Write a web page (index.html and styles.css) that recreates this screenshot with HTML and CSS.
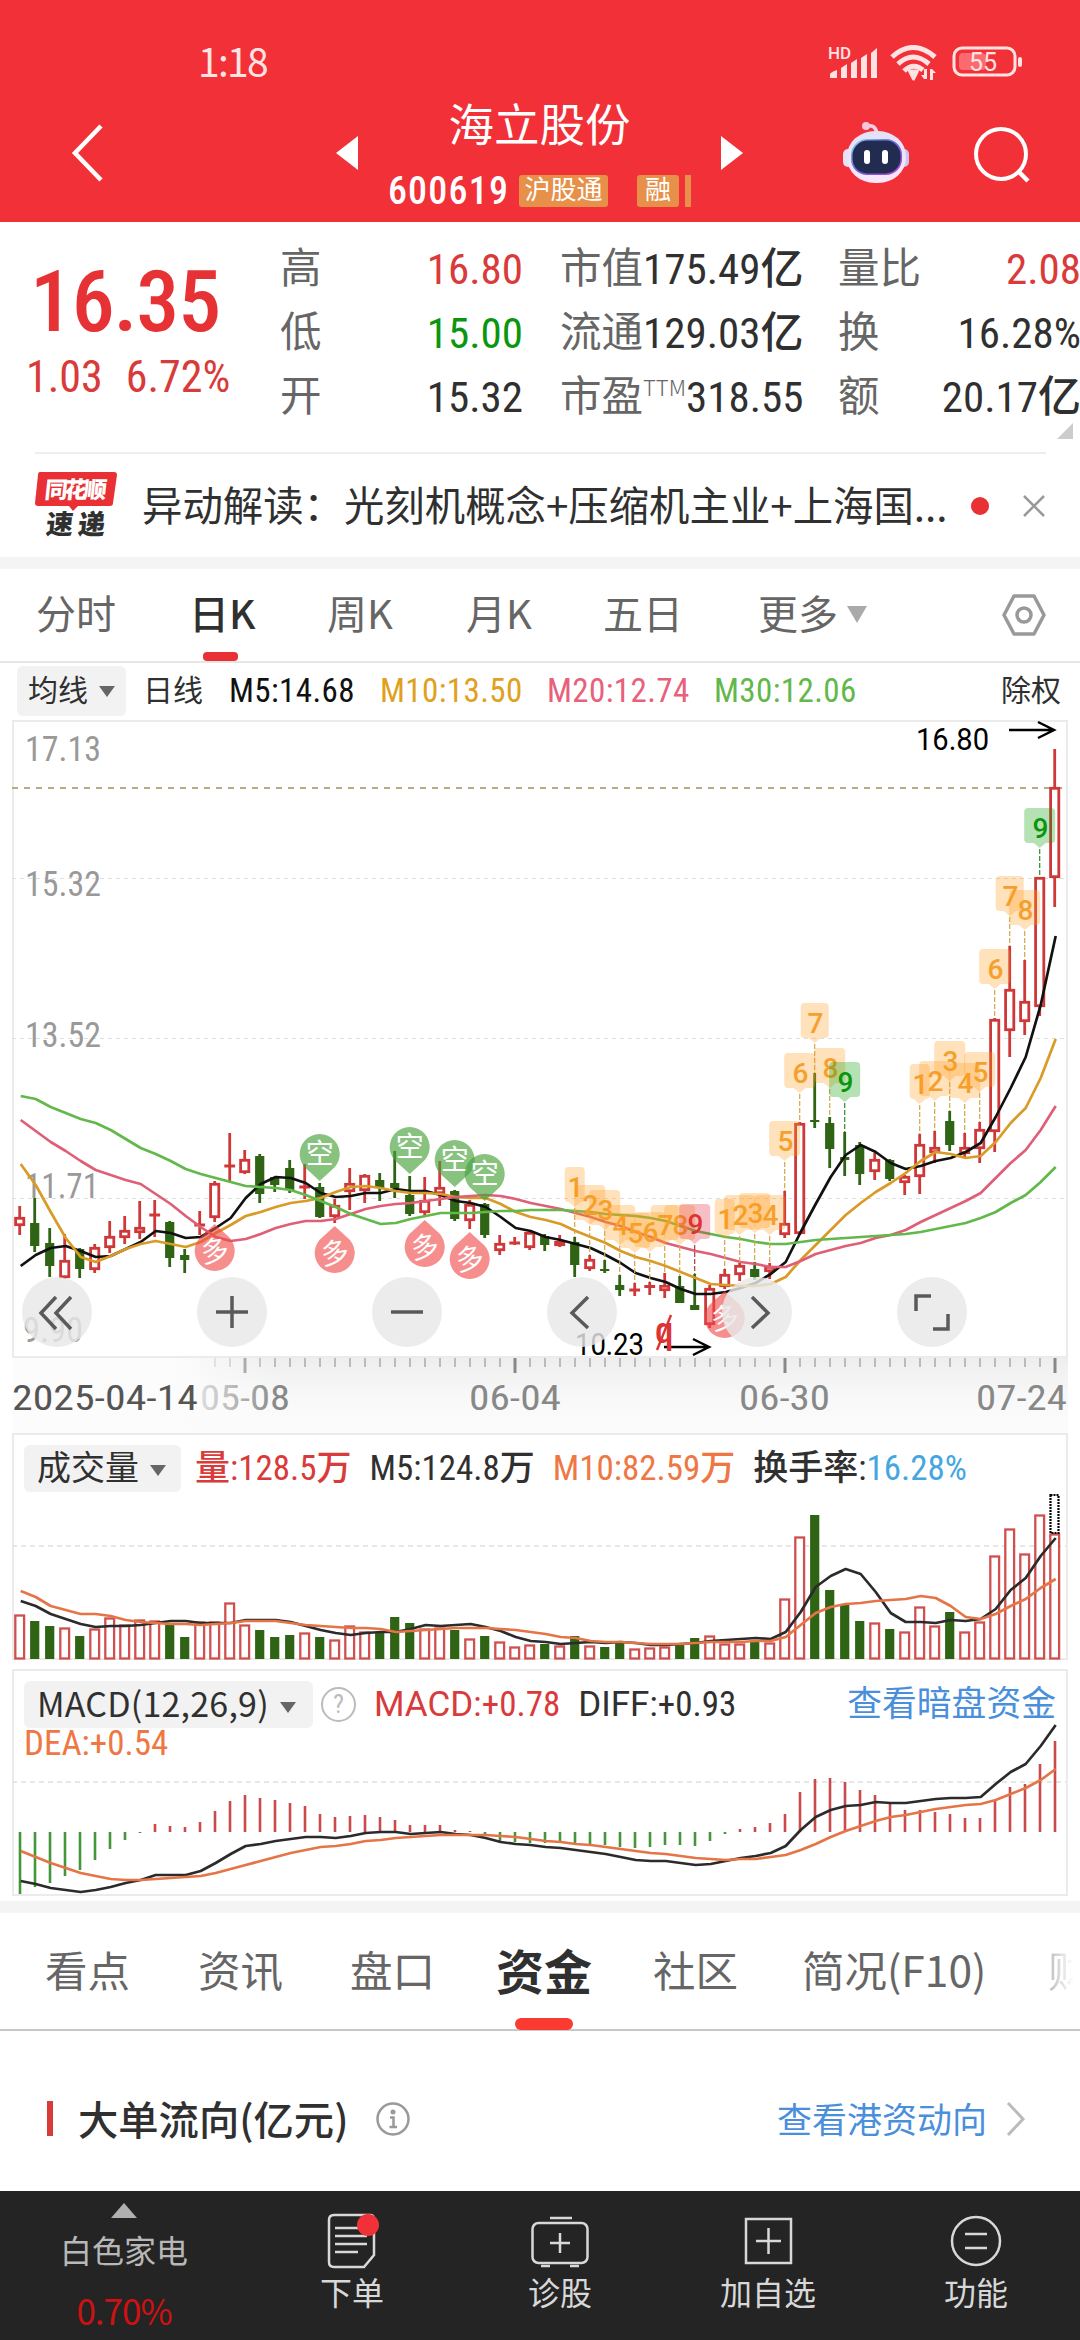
FILE: index.html
```html
<!DOCTYPE html>
<html lang="zh-CN">
<head>
    <meta charset="UTF-8">
    <meta name="viewport" content="width=device-width, initial-scale=1.0">
    <title>海立股份 600619</title>
    <link rel="stylesheet" href="styles.css">
</head>
<body>

    <!-- 顶部 -->
    <header class="header">
        <div class="status-bar">
            <span class="clock">1:18</span>
            <svg class="status-icons" width="200" height="40" viewBox="0 0 200 40">
                <g fill="#ffe3e3">
                    <text x="0" y="14" class="hd">HD</text>
                    <path d="M2 33v-4q1-2 7-4v8z M13 33v-10l6-4v14z M23 33v-15l6-4v19z M33 33v-20l6-4v24z M43 33v-25l6-5v30z"/>
                    <path d="M78 27l8 0l-4 8z" stroke="#ffe3e3" stroke-width="3" stroke-linejoin="round" transform="translate(3.5 -1)"/>
                    <path d="M99 24v10h-3l-3-4h3v-6z M102 35v-11h2l4 4h-3v7z"/>
                </g>
                <g fill="none" stroke="#ffe3e3" stroke-width="5">
                    <path d="M64 12Q85-7 107 12"/>
                    <path d="M70 19Q85 5 101 19"/>
                    <path d="M76 26Q85 17 95 25"/>
                </g>
                <rect x="126" y="3" width="61" height="27" rx="8" fill="none" stroke="#ffe3e3" stroke-width="3"/>
                <rect x="131" y="8" width="27" height="17" rx="4" fill="#fa6a6f"/>
                <rect x="190" y="12" width="4" height="10" rx="2" fill="#ffe3e3"/>
                <text x="155" y="26" class="battery">55</text>
            </svg>
        </div>
        <div class="title-bar">
            <svg class="back" width="34" height="60" viewBox="0 0 34 60"><path d="M30 3L4 30L30 57" fill="none" stroke="#fff" stroke-width="4.5"/></svg>
            <svg width="22" height="34" viewBox="0 0 22 34"><path d="M22 0v34L0 17z" fill="#fff"/></svg>
            <div class="stock">
                <h1 class="stock-name">海立股份</h1>
                <div class="stock-code">
                    <span class="code">600619</span>
                    <span class="tag">沪股通</span>
                    <span class="tag tag-rong">融</span>
                    <span class="tag-rest"></span>
                </div>
            </div>
            <svg width="22" height="34" viewBox="0 0 22 34"><path d="M0 0v34L22 17z" fill="#fff"/></svg>
            <svg class="robot" width="68" height="64" viewBox="0 0 68 64">
                <defs>
                    <linearGradient id="shell" x1="0" y1="0" x2="0" y2="1">
                        <stop offset="0" stop-color="#e3e1f6"/><stop offset="1" stop-color="#fbe6fa"/>
                    </linearGradient>
                    <linearGradient id="visor" x1="0" y1="0" x2="1" y2="1">
                        <stop offset="0" stop-color="#8fdcf5"/><stop offset=".5" stop-color="#5f62d8"/><stop offset="1" stop-color="#b44bd0"/>
                    </linearGradient>
                </defs>
                <path d="M25 5q8-2 10 7" fill="none" stroke="#f3cfe6" stroke-width="3.5"/>
                <circle cx="24" cy="5" r="4" fill="#f6c6df"/>
                <rect x="1" y="28" width="10" height="18" rx="5" fill="#e6e2f8"/>
                <rect x="57" y="28" width="10" height="18" rx="5" fill="#c9c5f0"/>
                <rect x="5" y="10" width="59" height="52" rx="28" ry="25" fill="url(#shell)"/>
                <rect x="9" y="18" width="51" height="36" rx="16" fill="url(#visor)"/>
                <rect x="10.5" y="19.5" width="48" height="33" rx="15" fill="#222c50"/>
                <rect x="22" y="29" width="6" height="14" rx="3" fill="#fff"/>
                <rect x="40" y="29" width="6" height="14" rx="3" fill="#fff"/>
            </svg>
            <svg class="search" width="58" height="60" viewBox="0 0 58 60"><circle cx="28" cy="28" r="25" fill="none" stroke="#fff" stroke-width="4"/><path d="M45 45L55 55" stroke="#fff" stroke-width="4.5"/></svg>
        </div>
    </header>

    <!-- 行情 -->
    <section class="quote">
        <div class="price">
            <div class="last">16.35</div>
            <div class="change"><span>1.03</span><span>6.72%</span></div>
        </div>
        <dl class="stats">
            <div><dt>高</dt><dd class="up">16.80</dd></div>
            <div><dt>低</dt><dd class="down">15.00</dd></div>
            <div><dt>开</dt><dd>15.32</dd></div>
        </dl>
        <dl class="stats">
            <div><dt>市值</dt><dd>175.49亿</dd></div>
            <div><dt>流通</dt><dd>129.03亿</dd></div>
            <div><dt>市盈<sup>TTM</sup></dt><dd>318.55</dd></div>
        </dl>
        <dl class="stats">
            <div><dt>量比</dt><dd class="up">2.08</dd></div>
            <div><dt>换</dt><dd>16.28%</dd></div>
            <div><dt>额</dt><dd>20.17亿</dd></div>
        </dl>
        <span class="corner"></span>
    </section>

    <!-- 快讯 -->
    <section class="news">
        <svg class="news-logo" width="84" height="72" viewBox="0 0 84 72">
            <path d="M5 2H79q3 0 3 3L78 33q0 3-3 3H43l-5 5l-4-5H3q-3 0-3-3L3 5q0-3 2-3z" fill="#e83035"/>
            <text x="9" y="28" class="logo-top" textLength="62" transform="skewX(-6) translate(3 0)">同花顺</text>
            <text x="12" y="64" class="logo-bottom" textLength="59" transform="skewX(-6) translate(5 0)">速递</text>
        </svg>
        <span class="news-text">异动解读：光刻机概念+压缩机主业+上海国...</span>
        <i class="dot"></i>
        <svg class="close" width="24" height="24" viewBox="0 0 24 24"><path d="M2 2L22 22M22 2L2 22" stroke="#999" stroke-width="2.5"/></svg>
    </section>

    <div class="band"></div>

    <!-- 周期 -->
    <nav class="periods">
        <span>分时</span>
        <span class="on">日K</span>
        <span>周K</span>
        <span>月K</span>
        <span>五日</span>
        <span>更多<i class="caret caret-light"></i></span>
        <svg width="46" height="44" viewBox="0 0 46 44"><path d="M13 3H33L43 22L33 41H13L3 22z" fill="none" stroke="#999" stroke-width="3.5" stroke-linejoin="round"/><circle cx="23" cy="22" r="7" fill="none" stroke="#999" stroke-width="3.5"/></svg>
    </nav>

    <div class="ma-row">
        <span class="select">均线<i class="caret"></i></span>
        <span class="ma-day">日线</span>
        <span class="m5">M5:14.68</span>
        <span class="m10">M10:13.50</span>
        <span class="m20">M20:12.74</span>
        <span class="m30">M30:12.06</span>
        <span class="right-text">除权</span>
    </div>

    <!-- K线图 -->
    <section class="panel k-panel">
        <svg id="kline" width="1080" height="638" viewBox="0 0 1080 638"></svg>
        <div class="controls">
            <button><svg viewBox="0 0 70 70"><path d="M34 20L19 36L34 52M49 20L34 36L49 52"/></svg></button>
            <button><svg viewBox="0 0 70 70"><path d="M19 35H51M35 19V51"/></svg></button>
            <button><svg viewBox="0 0 70 70"><path d="M19 35H51"/></svg></button>
            <button><svg viewBox="0 0 70 70"><path d="M41 20L25 36L41 51"/></svg></button>
            <button><svg viewBox="0 0 70 70"><path d="M30 20L46 36L30 51"/></svg></button>
            <button><svg viewBox="0 0 70 70"><path d="M19 34V19H34M51 37V52H36"/></svg></button>
        </div>
    </section>
    <svg id="axis" class="axis" width="1080" height="75" viewBox="0 0 1080 75"></svg>

    <!-- 成交量 -->
    <section class="panel vol-panel">
        <svg id="volume" width="1080" height="228" viewBox="0 0 1080 228"></svg>
        <div class="info">
            <span class="select">成交量<i class="caret"></i></span>
            <span class="up">量:128.5万</span>
            <span>M5:124.8万</span>
            <span class="orange">M10:82.59万</span>
            <span>换手率:<em>16.28%</em></span>
        </div>
    </section>

    <!-- MACD -->
    <section class="panel macd-panel">
        <svg id="macd" width="1080" height="228" viewBox="0 0 1080 228"></svg>
        <div class="info">
            <span class="select">MACD(12,26,9)<i class="caret"></i></span>
            <span class="help">?</span>
            <span class="up"><b>MACD:</b>+0.78</span>
            <span><b>DIFF:</b>+0.93</span>
            <a class="right-text">查看暗盘资金</a>
            <span class="orange dea">DEA:+0.54</span>
        </div>
    </section>

    <div class="band"></div>

    <!-- 资讯标签 -->
    <nav class="tabs">
        <span>看点</span>
        <span>资讯</span>
        <span>盘口</span>
        <span class="on">资金</span>
        <span>社区</span>
        <span>简况(F10)</span>
        <span class="fade">财务</span>
    </nav>

    <section class="flow">
        <h2>大单流向(亿元)</h2>
        <svg width="36" height="36" viewBox="0 0 36 36"><circle cx="18" cy="18" r="15.5" fill="none" stroke="#999" stroke-width="2.5"/><circle cx="18" cy="11" r="2.5" fill="#999"/><path d="M15 16.5H18.5V26M14.5 26H22" fill="none" stroke="#999" stroke-width="2.5"/></svg>
        <a>查看港资动向</a>
        <svg width="22" height="38" viewBox="0 0 22 38"><path d="M3 3L18 19L3 35" fill="none" stroke="#bbb" stroke-width="3"/></svg>
    </section>

    <!-- 底部导航 -->
    <footer class="bottom">
        <div class="sector">
            <i class="tri-up"></i>
            <span>白色家电</span>
            <b>0.70%</b>
        </div>
        <div class="item">
            <svg width="60" height="60" viewBox="0 0 60 60"><g fill="none" stroke="#d8d8d8" stroke-width="2.5"><path d="M12 6H48q4 0 4 4V46L42 58H12q-5 0-5-5V11q0-5 5-5z"/><path d="M13 19H36M13 27H45M13 35H45M13 43H36"/></g><circle cx="46" cy="16" r="11" fill="#f03238"/></svg>
            <span>下单</span>
        </div>
        <div class="item">
            <svg width="60" height="60" viewBox="0 0 60 60"><g fill="none" stroke="#d8d8d8" stroke-width="2.5"><rect x="2.5" y="14" width="55" height="40" rx="6"/><path d="M20 9H42M30 24V44M20 34H40M11 57H20M40 57H49"/></g></svg>
            <span>诊股</span>
        </div>
        <div class="item">
            <svg width="60" height="60" viewBox="0 0 60 60"><path d="M8 10H53V54H8zM30.500 19V45M18 32H43" fill="none" stroke="#d8d8d8" stroke-width="2.5"/></svg>
            <span>加自选</span>
        </div>
        <div class="item">
            <svg width="60" height="60" viewBox="0 0 60 60"><g fill="none" stroke="#d8d8d8" stroke-width="2.5"><circle cx="30" cy="32" r="24"/><path d="M19 25H41M19 39H41"/></g></svg>
            <span>功能</span>
        </div>
    </footer>

    <script src="chart.js"></script>
</body>
</html>
```
FILE: styles.css
```css
* {
    box-sizing: border-box;
}
body {
    margin: 0;
    width: 1080px;
    height: 2340px;
    overflow: hidden;
    background-color: #fff;
    color: #303030;
    font-family: "Roboto Condensed", "Noto Sans CJK SC", sans-serif;
}
h1, h2, dl, dd {
    margin: 0;
    font-weight: 400;
}
svg {
    display: block;
}
span, a, dt, dd {
    white-space: nowrap;
}
.up {
    color: #d93a3a;
}
.down {
    color: #0a960f;
}
.orange {
    color: #ee7744;
}
/* 顶部红色区域 */
.header {
    height: 222px;
    background-color: #f23037;
    color: #fff;
}
.status-bar {
    height: 84px;
    padding: 45px 0 0 198px;
    display: flex;
}
.clock {
    width: 630px;
    margin-top: -5px;
    font: 400 39px/40px "Noto Sans CJK SC", sans-serif;
    letter-spacing: -1.7px;
    color: #ffe3e3;
}
.hd {
    font: 500 17px Roboto, sans-serif;
}
.battery {
    font: 400 25px Roboto, sans-serif;
    text-anchor: middle;
    fill: #ffe3e3;
}
.title-bar {
    height: 138px;
    display: grid;
    grid-template-columns: 265px 22px 363px 22px 1fr 130px 108px;
    align-items: center;
    padding-left: 71px;
}
.robot {
    grid-column: 6;
}
.search {
    margin: 5px 0 0 1px;
}
.stock {
    display: flex;
    flex-direction: column;
    align-items: center;
}
.stock-name {
    font-size: 45.5px;
    line-height: 76px;
}
.stock-code {
    display: flex;
    align-items: center;
    height: 52px;
}
.code {
    font-size: 38px;
    font-weight: 500;
    letter-spacing: 1.2px;
    margin-right: 10px;
}
.tag {
    height: 32px;
    width: 89px;
    border-radius: 3px;
    background-color: #e6904a;
    font-size: 26px;
    line-height: 31px;
    text-align: center;
}
.tag-rong {
    width: 42px;
    margin: 0 6px 0 29px;
}
.tag-rest {
    width: 6px;
    height: 32px;
    background-color: #e6904a;
}
/* 行情数据 */
.quote {
    position: relative;
    height: 230px;
    padding-top: 15px;
    display: grid;
    grid-template-columns: 243px 243px 241px 243px;
    column-gap: 37px;
}
.price {
    margin-right: -37px;
    color: #e63234;
}
.last {
    padding-left: 30px;
    font-size: 86px;
    font-weight: 500;
    letter-spacing: -1.2px;
    line-height: 130px;
}
.change {
    display: flex;
    gap: 23px;
    padding-left: 26px;
    font-size: 44px;
    font-weight: 450;
    line-height: 20px;
    color: #d93a3a;
}
.stats div {
    height: 64px;
    display: flex;
    justify-content: space-between;
    align-items: center;
}
.stats dt {
    font-size: 41.5px;
    line-height: 60px;
    color: #666;
}
.stats dd {
    font-size: 43px;
    line-height: 64px;
    font-weight: 450;
}
.stats sup {
    font: 300 22px/20px "Noto Sans CJK SC", sans-serif;
    vertical-align: 15px;
}
.corner {
    position: absolute;
    right: 7px;
    bottom: 13px;
    border-left: 16px solid transparent;
    border-bottom: 16px solid #ccc;
}
/* 快讯 */
.news {
    height: 105px;
    margin: 0 34px 0 35px;
    border-top: 2px solid #eee;
    display: flex;
    align-items: center;
}
.news-logo {
    margin-top: 1px;
}
.logo-top {
    font: 900 23px "Noto Sans CJK SC", sans-serif;
    fill: #fff;
}
.logo-bottom {
    font: 900 27px "Noto Sans CJK SC", sans-serif;
    fill: #303030;
}
.news-text {
    margin: -4px 0 0 23px;
    width: 829px;
    font: 400 40.4px/60px "Noto Sans CJK SC", sans-serif;
}
.dot {
    width: 18px;
    height: 18px;
    border-radius: 50%;
    background-color: #e83035;
}
.close {
    margin-left: auto;
}
.band {
    height: 12px;
    background-color: #f4f4f4;
}
/* 周期切换 */
.periods {
    height: 94px;
    border-bottom: 2px solid #e6e6e6;
    padding-left: 36px;
    display: grid;
    grid-template-columns: 153px 138px 139px 137px 155px 243px 46px;
    align-items: center;
    font: 400 40px/86px "Noto Sans CJK SC", sans-serif;
    color: #666;
}
.periods span {
    height: 92px;
}
.periods .on {
    color: #303030;
    font-weight: 500;
    position: relative;
}
.periods .on::after {
    content: "";
    position: absolute;
    left: 14px;
    bottom: 0;
    width: 35px;
    height: 9px;
    border-radius: 4px;
    background-color: #e83035;
}
.caret {
    display: inline-block;
    margin-left: 11px;
    vertical-align: 4px;
    border: 8px solid transparent;
    border-top: 11px solid #666;
    border-bottom: 0;
}
.caret-light {
    border-width: 17px 10px 0;
    border-top-color: #aaa;
    margin-left: 9px;
    vertical-align: 6px;
}
.ma-row {
    height: 57px;
    padding: 3px 19px 0 17px;
    display: flex;
    font-size: 33px;
    line-height: 50px;
}
.select {
    width: 109px;
    height: 50px;
    padding-left: 11px;
    border-radius: 6px;
    background-color: #f2f2f2;
    color: #303030;
    font-size: 30px;
}
.ma-day {
    margin: 0 26px 0 17px;
    font-size: 30px;
}
.m5, .m10, .m20, .m30 {
    font-weight: 450;
    width: 167px;
    letter-spacing: 0.4px;
}
.m5 {
    width: 151px;
    color: #111;
}
.m10 {
    color: #e0a020;
}
.m20 {
    color: #e8607a;
}
.m30 {
    color: #62b84a;
}
.right-text {
    margin-left: auto;
    font-size: 30px;
}
/* 图表 */
.panel {
    display: grid;
}
.panel > * {
    grid-area: 1 / 1;
}
.k-panel {
    height: 638px;
}
.controls {
    align-self: end;
    display: flex;
    gap: 105px;
    padding: 0 0 11px 22px;
}
.controls button {
    width: 70px;
    height: 70px;
    padding: 0;
    border: none;
    border-radius: 50%;
    background-color: rgba(232, 232, 232, 0.82);
}
.controls path {
    fill: none;
    stroke: #5a5a5a;
    stroke-width: 3.5;
}
.axis {
    height: 75px;
}
.vol-panel {
    height: 228px;
    margin-bottom: 8px;
}
.macd-panel {
    height: 228px;
    margin-bottom: 4px;
}
.info {
    display: flex;
    flex-wrap: wrap;
    align-content: flex-start;
    gap: 0 18px;
    padding: 12px 24px 0 24px;
    font-size: 35px;
    font-weight: 450;
    line-height: 47px;
}
.info .select {
    width: 157px;
    height: 47px;
    padding-left: 13px;
    margin-right: -4px;
    font-size: 34px;
    font-weight: 400;
}
.info em {
    font-style: normal;
    color: #45a6e0;
}
.info a {
    font-size: 34.8px;
    font-weight: 400;
    color: #4a8fdc;
}
.info b {
    font: 400 35px Roboto, sans-serif;
}
.macd-panel .info .select {
    width: 289px;
    font-family: "Noto Sans CJK SC", sans-serif;
    line-height: 43px;
    letter-spacing: 0.2px;
}
.help {
    width: 35px;
    height: 35px;
    margin: 6px 0 0 -6px;
    border: 2.5px solid #bbb;
    border-radius: 50%;
    font-size: 26px;
    line-height: 30px;
    text-align: center;
    color: #bbb;
}
.dea {
    flex-basis: 100%;
    line-height: 32px;
}
/* K线图文字 */
.scale {
    font: 450 35px "Roboto Condensed", sans-serif;
    fill: #999;
}
.peak {
    font: 400 31px Roboto, sans-serif;
}
.badge {
    font: 500 28px Roboto, sans-serif;
    text-anchor: middle;
}
.bubble {
    font: 400 28px "Noto Sans CJK SC", sans-serif;
    text-anchor: middle;
    fill: #fff;
}
.date {
    font: 400 35px "Roboto Condensed", sans-serif;
    fill: #888;
}
.date-first {
    fill: #555;
}
/* 标签栏 */
.tabs {
    height: 118px;
    border-bottom: 2px solid #c8c8c8;
    padding-left: 45px;
    display: grid;
    grid-template-columns: 153px 152px 146px 157px 149px 246px 1fr;
    font: 400 42.5px/112px "Noto Sans CJK SC", sans-serif;
    color: #666;
}
.tabs .on {
    position: relative;
    font-size: 48px;
    font-weight: 700;
    color: #303030;
}
.tabs .on::after {
    content: "";
    position: absolute;
    left: 19px;
    bottom: -1px;
    width: 58px;
    height: 12px;
    border-radius: 6px;
    background-color: #fb3a32;
}
.tabs .fade {
    width: 32px;
    overflow: hidden;
    background: linear-gradient(90deg, #bbb, #fff 80%);
    -webkit-background-clip: text;
    color: transparent;
}
.flow {
    height: 160px;
    padding: 15px 53px 0 47px;
    display: flex;
    align-items: center;
}
.flow h2 {
    font: 500 40.3px/33px "Noto Sans CJK SC", sans-serif;
    height: 35px;
    padding-left: 25px;
    margin-right: 27px;
    border-left: 6px solid #d93a3a;
}
.flow a {
    margin: -3px 18px 0 auto;
    font-size: 35px;
    color: #4a8fdc;
}
/* 底部导航 */
.bottom {
    height: 149px;
    display: grid;
    grid-template-columns: 248px 208px 208px 208px 208px;
    background-color: #242424;
    color: #d8d8d8;
    font-size: 32px;
}
.sector {
    display: flex;
    flex-direction: column;
    align-items: center;
    padding-top: 12px;
    color: #b8b8b8;
}
.tri-up {
    border: 13px solid transparent;
    border-bottom: 15px solid #b0b0b0;
    border-top: 0;
}
.sector span {
    line-height: 68px;
}
.sector b {
    font: 400 35px/48px "Noto Sans CJK SC", sans-serif;
    letter-spacing: -1px;
    color: #cc1212;
}
.item {
    display: flex;
    flex-direction: column;
    align-items: center;
    padding-top: 18px;
}
.item span {
    line-height: 51px;
}
```
FILE: chart.js
```js
const X0 = 19.7, STEP = 15;
const px = i => X0 + STEP * i;

// [涨跌, 最高, 最低, 实体上沿, 实体下沿]
const candles = [
    [1,486,515,497,506],[0,478,532,503,526],[0,508,557,523,546],[1,514,559,540,558],[0,528,558,529,549],
    [1,524,553,527,550],[1,501,533,516,528],[1,496,524,510,518],[1,481,519,507,513],[1,480,517,494,496],
    [0,501,547,502,538],[0,529,553,535,540],[1,491,515,504,506],[1,461,502,463,498],[1,413,461,445,447],
    [1,430,454,439,453],[0,434,483,436,474],[0,457,472,457,465],[0,440,473,448,470],[1,444,479,466,468],
    [0,463,498,467,497],[1,479,503,485,497],[1,448,490,463,472],[1,454,483,455,471],[0,453,481,460,468],
    [0,431,478,463,468],[0,456,496,475,494],[1,457,496,480,493],[1,441,486,467,474],[0,470,501,471,499],
    [1,480,509,484,501],[0,483,518,484,515],[1,515,535,523,531],[1,517,525,522,524],[1,512,530,512,528],
    [0,514,531,516,525],[1,515,527,521,526],[0,517,557,522,545],[1,535,551,539,549],[0,540,553,549,551],
    [0,555,576,565,570],[1,563,576,569,571],[1,562,575,566,567],[1,553,578,565,571],[0,556,583,566,583],
    [0,554,590,585,590],[1,565,608,568,605],[1,549,569,554,567],[1,543,561,545,555],[0,542,560,549,557],
    [1,543,559,546,552],[1,471,518,503,515],[1,402,515,403,514],[0,353,408,400,402],[0,397,448,403,429],
    [0,412,456,437,440],[0,422,465,425,454],[1,433,460,439,452],[0,439,461,440,459],[1,455,475,456,463],
    [1,414,474,424,457],[1,411,443,427,433],[0,391,431,401,425],[1,413,437,427,434],[1,402,443,409,429],
    [1,298,432,299,412],[1,226,337,269,311],[1,240,315,281,302],[1,157,296,157,287],[1,29,187,67,158]
];
const ma5 = [546,535,528,526,531,537,536,529,522,511,513,518,517,508,498,478,464,457,458,463,473,477,476,473,473,469,471,471,475,481,483,487,497,508,511,
    517,520,524,528,535,543,553,558,562,569,574,574,572,568,563,554,542,512,484,457,435,425,432,443,449,446,441,438,432,423,397,368,337,285,216];
const ma10 = [444,465,492,518,537,542,536,529,524,521,524,527,522,513,505,496,492,487,483,481,478,472,467,466,468,471,473,473,474,477,478,478,484,492,497,
    500,504,511,517,523,531,537,541,546,552,558,564,565,566,566,564,557,540,525,510,495,483,472,463,453,441,432,434,438,436,422,403,388,358,319];
const ma20 = [400,411,422,431,441,450,455,460,464,474,484,496,507,517,521,519,514,508,504,501,501,499,494,489,486,484,483,481,479,477,476,475,476,479,483,
    486,489,493,497,502,506,512,517,523,527,531,534,538,542,544,547,547,541,534,530,526,523,518,515,510,502,495,488,481,473,458,443,430,410,386];
const ma30 = [376,379,387,393,399,403,410,419,428,434,441,449,454,458,462,466,467,468,470,475,481,487,494,499,504,503,499,496,493,493,493,492,491,491,490,
    490,490,491,492,494,495,496,498,501,506,511,514,517,519,522,524,524,522,520,519,518,517,516,515,514,512,509,506,503,498,492,483,475,462,447];

const vol = [45,38,33,32,23,31,42,35,40,39,35,22,38,38,57,35,29,22,24,27,22,20,34,28,27,42,36,31,32,29,21,23,18,13,15,
    15,14,23,14,12,16,11,12,13,14,21,24,16,16,18,17,61,123,144,69,54,38,37,30,28,53,34,47,28,38,104,131,106,145,126];
const vol5 = [168,173,181,186,191,194,193,193,192,190,188,188,190,190,190,187,187,187,189,193,197,200,202,200,199,199,196,192,193,192,191,194,198,204,208,
    209,211,210,209,210,209,210,212,212,211,210,208,207,206,205,206,199,179,154,143,136,141,159,180,189,189,190,187,188,186,176,157,145,123,105];
const vol10 = [158,164,173,177,181,181,183,187,189,190,191,191,192,191,190,188,188,188,190,192,193,194,195,195,196,199,198,197,196,195,195,195,196,197,199,
    201,204,205,208,209,209,210,211,211,211,210,209,209,209,208,208,204,192,180,174,171,170,168,167,166,163,165,173,184,186,181,173,166,155,146];

const macd = [-62,-55,-51,-44,-38,-28,-17,-8,-1,8,6,5,10,21,31,37,34,32,29,26,18,15,16,17,15,12,7,7,7,2,1,-2,-9,-10,-11,
    -11,-9,-11,-12,-13,-15,-16,-15,-13,-13,-14,-9,-2,3,5,9,18,40,53,54,50,42,37,29,22,22,20,18,14,14,32,45,48,68,91];
const diff = [212,215,219,221,223,221,218,214,211,206,206,206,202,194,185,177,175,172,170,168,168,169,167,164,163,163,165,164,163,165,166,169,173,175,176,
    178,179,181,183,185,188,191,192,192,194,196,195,192,189,187,184,177,161,148,141,137,136,133,134,134,132,130,129,129,128,115,103,95,77,56];
const dea = [182,188,194,199,204,207,210,211,211,210,209,208,207,204,200,196,192,188,184,181,178,177,175,172,171,169,168,167,166,166,166,166,167,168,170,
    172,173,175,176,178,180,182,184,185,187,189,190,191,190,190,188,186,181,175,168,162,157,152,148,146,143,140,138,136,135,131,125,119,111,100];

// 九转标记 [序号, 顶部, 数字, 颜色]
const badges = [
    [37,447,1],[38,465,2],[39,470,3],[40,485,4],[41,493,5],[42,492,6],[43,485,7],[44,485,8],[45,484,9,'red'],
    [47,479,1],[48,475,2],[49,473,3],[50,475,4],[51,401,5],[52,333,6],[53,283,7],[54,328,8],[55,342,9,'green'],
    [60,344,1],[61,341,2],[62,321,3],[63,343,4],[64,332,5],[65,229,6],[66,156,7],[67,170,8],[68,88,9,'green']
];
const badgeColor = {
    orange: ['#ff9c1f', '#f5a02c', '#d0a84a'],
    green: ['#0a9a0a', '#0a960a', '#2f8a2f'],
    red: ['#e02a40', '#dd3333', '#a83a44']
};

const line = (x1, y1, x2, y2, color, w, dash) =>
    `<line x1="${x1}" y1="${y1}" x2="${x2}" y2="${y2}" stroke="${color}" stroke-width="${w}"${dash ? ` stroke-dasharray="${dash}"` : ''}/>`;
const curve = (data, color) =>
    `<polyline points="${data.map((y, i) => `${(px(i) + 1).toFixed(1)},${y}`).join(' ')}" fill="none" stroke="${color}" stroke-width="2.7" stroke-linejoin="round"/>`;
const text = (x, y, s, cls, w) =>
    `<text x="${x}" y="${y}" class="${cls}"${w ? ` textLength="${w}" lengthAdjust="spacingAndGlyphs"` : ''}>${s}</text>`;
const frame = h => `<rect x="13" y="1" width="1054" height="${h}" fill="none" stroke="#ebebeb" stroke-width="2"/>`;

function drawK() {
    let s = frame(636);
    [158.5, 318.5, 478.5].forEach(y => s += line(12, y, 1066, y, '#dedede', 1.2, '4 4'));
    s += line(12, 68, 1066, 68, '#b9a984', 2, '6 6');
    s += text(25, 41, '17.13', 'scale', 76) + text(25, 176, '15.32', 'scale', 76) + text(25, 327, '13.52', 'scale', 76);
    s += text(25, 478, '11.71', 'scale', 74) + text(23, 622, '9.90', 'scale', 60);

    candles.forEach(([up, hi, lo, top, bot], i) => {
        const x = px(i);
        if (!up) {
            s += line(x, hi, x, lo, '#2f6414', 2.8) + `<rect x="${x - 4.6}" y="${top}" width="9.2" height="${bot - top}" fill="#2f6414"/>`;
        } else if (bot - top < 4) {
            s += line(x, hi, x, lo, '#cf3838', 2.8) + line(x - 5.4, (top + bot) / 2, x + 5.4, (top + bot) / 2, '#cf3838', 3);
        } else {
            s += line(x, hi, x, top, '#cf3838', 2.8) + line(x, bot, x, lo, '#cf3838', 2.8);
            s += `<rect x="${x - 4.1}" y="${top + 1.3}" width="8.2" height="${bot - top - 2.6}" fill="#fff" stroke="#cf3838" stroke-width="2.8"/>`;
        }
    });
    s += curve(ma5, '#111') + curve(ma10, '#d99a26') + curve(ma20, '#df5f76') + curve(ma30, '#62b84a');

    // 多空气泡
    [[20,434],[26,427],[29,440],[31,454]].forEach(([i, y]) => {
        const x = px(i);
        s += `<path d="M${x - 12} ${y + 16}L${x} ${y + 27}L${x + 12} ${y + 16}A20 20 0 1 0 ${x - 12} ${y + 16}z" fill="#46a13a" opacity=".65"/>` + text(x, y + 10, '空', 'bubble');
    });
    [[13,531],[21,533],[27,527],[30,539],[47,598]].forEach(([i, y]) => {
        const x = px(i);
        s += `<path d="M${x - 12} ${y - 16}L${x} ${y - 27}L${x + 12} ${y - 16}A20 20 0 1 1 ${x - 12} ${y - 16}z" fill="#f04848" opacity=".62"/>`;
        s += `<g transform="rotate(-10 ${x} ${y})">${text(x, y + 10, '多', 'bubble')}</g>`;
    });

    badges.forEach(([i, y, n, c]) => {
        const x = px(i), w = n === 1 ? 10 : n === 7 ? 14 : 15.5;
        const [bg, fg, dash] = badgeColor[c || 'orange'];
        s += line(x, y + 41, x, candles[i][1], dash, 1.2, '5 2');
        s += `<path d="M${x - w + 4} ${y}H${x + w - 4}q4 0 4 4V${y + 31}q0 4-4 4H${x + 6}L${x} ${y + 40}L${x - 6} ${y + 35}H${x - w + 4}q-4 0-4-4V${y + 4}q0-4 4-4z" fill="${bg}" opacity=".3"/>`;
        s += `<text x="${x + 0.8}" y="${y + 30}" class="badge" fill="${fg}">${n}</text>`;
    });

    s += text(916, 29.5, '16.80', 'peak', 73) + text(575, 635, '10.23', 'peak', 69);
    s += `<path d="M1009 10H1054M1038 2L1054 10L1038 18M664 627H709M693 619L709 627L693 635" fill="none" stroke="#000" stroke-width="2.5"/>`;
    s += `<text x="655" y="623" font-size="37" font-weight="500" fill="#dd3333">q</text>` + line(657, 630, 671, 595, '#dd3333', 2.4);
    document.getElementById('kline').innerHTML = s;
}

function drawAxis() {
    let s = `<defs><linearGradient id="ax" x1="0" y1="0" x2="0" y2="1"><stop offset="0" stop-color="#eee"/><stop offset=".5" stop-color="#f8f8f8"/><stop offset="1" stop-color="#fcfcfc"/></linearGradient>
        <linearGradient id="left" x1="0" x2="1"><stop offset="0" stop-color="#fcfcfc"/><stop offset=".6" stop-color="#fcfcfc"/><stop offset="1" stop-color="#fcfcfc" stop-opacity="0"/></linearGradient></defs>
        <rect x="13" width="1055" height="75" fill="url(#ax)"/>`;
    for (let i = 13; i < 70; i++) {
        const big = i % 18 === 15;
        s += line(px(i) + 0.3, 0, px(i) + 0.3, big ? 15 : 9, big ? '#888' : '#bbb', big ? 3 : 2);
    }
    s += text(200, 52, '05-08', 'date', 90) + text(469, 52, '06-04', 'date', 92) + text(739, 52, '06-30', 'date', 91) + text(976, 52, '07-24', 'date', 91);
    s += '<rect x="13" width="265" height="75" fill="url(#left)"/>' + text(12, 52, '2025-04-14', 'date date-first', 186);
    document.getElementById('axis').innerHTML = s;
}

function drawVolume() {
    let s = frame(225) + line(12, 113, 1066, 113, '#e6e6e6', 2, '5 4');
    vol.forEach((h, i) => {
        const x = px(i);
        s += candles[i][0]
            ? `<rect x="${x - 4.4}" y="${227.5 - h}" width="8.8" height="${h - 2}" fill="#fff" stroke="#d05050" stroke-width="2.3"/>`
            : `<rect x="${x - 4.6}" y="${226 - h}" width="9.2" height="${h}" fill="#2f6414"/>`;
    });
    s += '<rect x="1050.5" y="62" width="8" height="38" fill="#fff" stroke="#000" stroke-width="2.2" stroke-dasharray="2 1"/>';
    s += curve(vol5, '#2b2b2b') + curve(vol10, '#e57446');
    document.getElementById('volume').innerHTML = s;
}

function drawMacd() {
    let s = frame(225) + line(12, 113, 1066, 113, '#e6e6e6', 2, '5 4');
    macd.forEach((v, i) => s += line(px(i) + 0.3, 163, px(i) + 0.3, 163 - v, v > 0 ? '#c94b4b' : '#43963a', 2.6));
    s += curve(diff, '#2b2b2b') + curve(dea, '#e57446');
    document.getElementById('macd').innerHTML = s;
}

drawK();
drawAxis();
drawVolume();
drawMacd();
```
